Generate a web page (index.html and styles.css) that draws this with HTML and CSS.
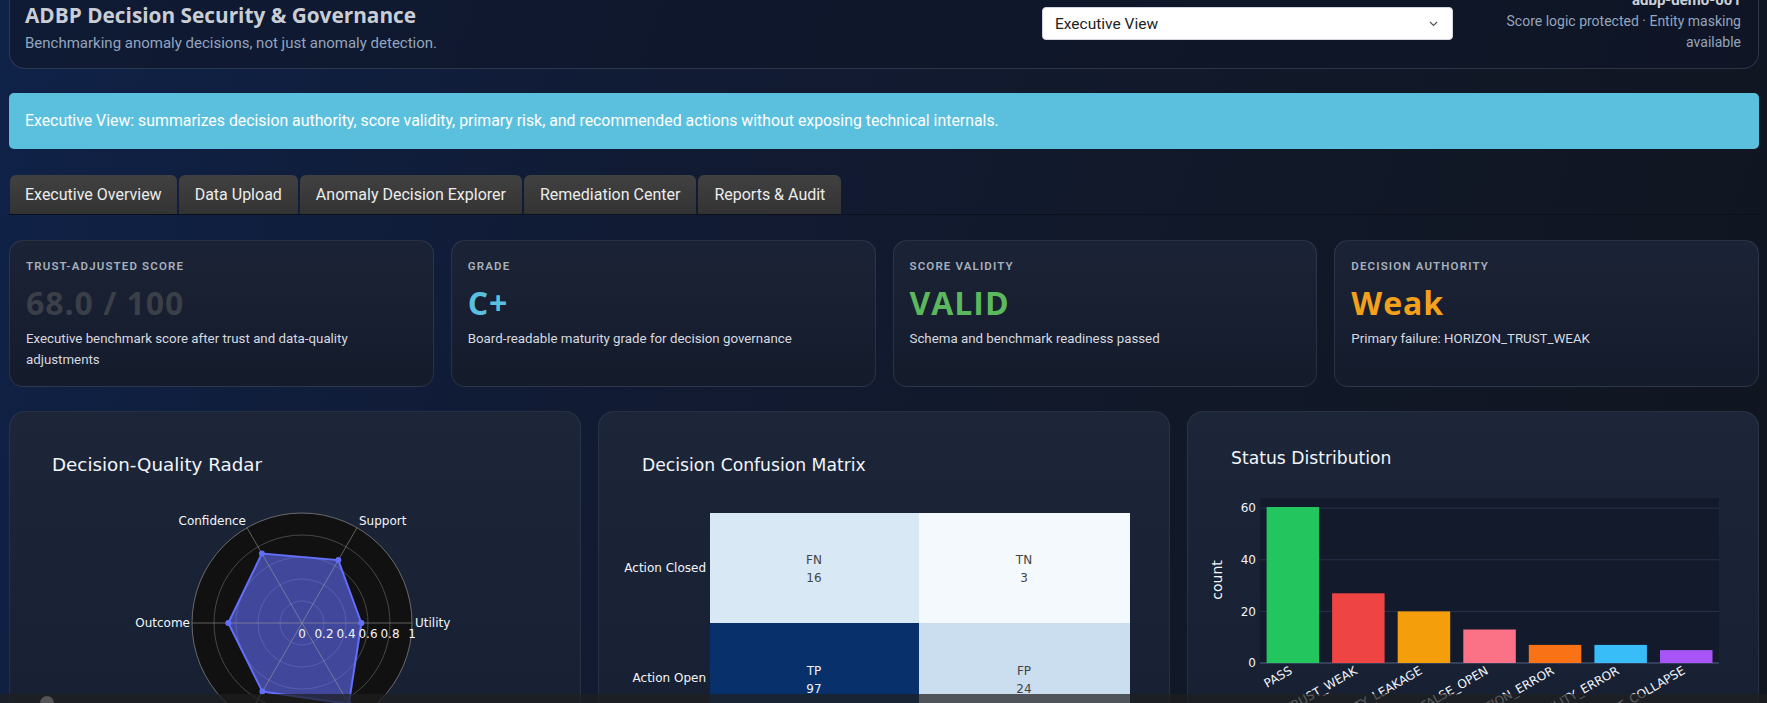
FILE: index.html
```html
<html>
	<head>
		<title>ADBP Decision Security &amp; Governance</title>
		<link rel="stylesheet" href="styles.css">
	</head>
	<body>
		<div class="page">

			<header class="hero">
				<div class="heroTitle">
					<h1>ADBP Decision Security &amp; Governance</h1>
					<p>Benchmarking anomaly decisions, not just anomaly detection.</p>
				</div>
				<div class="heroSelect">
					<div class="select">
						<span>Executive View</span>
						<svg width="9" height="6" viewBox="0 0 9 6"><polyline points="1,1 4.5,4.5 8,1" fill="none" stroke="#555" stroke-width="1.2"/></svg>
					</div>
				</div>
				<div class="heroMeta">
					<strong>adbp-demo-001</strong>
					Score logic protected · Entity masking available
				</div>
			</header>

			<div class="banner">
				Executive View: summarizes decision authority, score validity, primary risk, and recommended actions without exposing technical internals.
			</div>

			<nav class="tabs">
				<div class="tab active">Executive Overview</div>
				<div class="tab">Data Upload</div>
				<div class="tab">Anomaly Decision Explorer</div>
				<div class="tab">Remediation Center</div>
				<div class="tab">Reports &amp; Audit</div>
			</nav>

			<section class="kpis">
				<div class="kpi">
					<div class="kpiLabel">Trust-Adjusted Score</div>
					<div class="kpiValue score">68.0 / 100</div>
					<div class="kpiDesc">Executive benchmark score after trust and data-quality adjustments</div>
				</div>
				<div class="kpi">
					<div class="kpiLabel">Grade</div>
					<div class="kpiValue grade">C+</div>
					<div class="kpiDesc">Board-readable maturity grade for decision governance</div>
				</div>
				<div class="kpi">
					<div class="kpiLabel">Score Validity</div>
					<div class="kpiValue valid">VALID</div>
					<div class="kpiDesc">Schema and benchmark readiness passed</div>
				</div>
				<div class="kpi">
					<div class="kpiLabel">Decision Authority</div>
					<div class="kpiValue weak">Weak</div>
					<div class="kpiDesc">Primary failure: HORIZON_TRUST_WEAK</div>
				</div>
			</section>

			<section class="charts">
				<!-- radar -->
				<div class="chart">
					<svg class="plot" width="572" height="320" viewBox="0 0 572 320">
						<text class="plotTitle wide" x="43" y="60">Decision-Quality Radar</text>
						<circle cx="293" cy="212" r="110" fill="#111111"/>
						<g fill="none" stroke="#474747" stroke-width="1">
							<circle cx="293" cy="212" r="22"/>
							<circle cx="293" cy="212" r="44"/>
							<circle cx="293" cy="212" r="66"/>
							<circle cx="293" cy="212" r="88"/>
						</g>
						<circle cx="293" cy="212" r="110" fill="none" stroke="#6a6a6a"/>
						<polygon points="352.4,212 329.3,149.1 252.9,142.5 219.3,212 253.4,280.6 339.8,293" fill="rgba(99,110,250,0.6)" stroke="#636efa" stroke-width="2"/>
						<g stroke="rgba(160,160,160,0.55)" stroke-width="1">
							<line x1="293" y1="212" x2="403" y2="212"/>
							<line x1="293" y1="212" x2="348" y2="116.7"/>
							<line x1="293" y1="212" x2="238" y2="116.7"/>
							<line x1="293" y1="212" x2="183" y2="212"/>
							<line x1="293" y1="212" x2="238" y2="307.3"/>
							<line x1="293" y1="212" x2="348" y2="307.3"/>
						</g>
						<g fill="#636efa">
							<circle cx="352.4" cy="212" r="3"/>
							<circle cx="329.3" cy="149.1" r="3"/>
							<circle cx="252.9" cy="142.5" r="3"/>
							<circle cx="219.3" cy="212" r="3"/>
							<circle cx="253.4" cy="280.6" r="3"/>
							<circle cx="339.8" cy="293" r="3"/>
						</g>
						<g class="tick">
							<text x="237" y="114" text-anchor="end">Confidence</text>
							<text x="350" y="114">Support</text>
							<text x="181" y="216" text-anchor="end">Outcome</text>
							<text x="406" y="216">Utility</text>
						</g>
						<g class="tick" text-anchor="middle">
							<text x="293" y="227">0</text>
							<text x="315" y="227">0.2</text>
							<text x="337" y="227">0.4</text>
							<text x="359" y="227">0.6</text>
							<text x="381" y="227">0.8</text>
							<text x="403" y="227">1</text>
						</g>
					</svg>
				</div>

				<!-- confusion matrix -->
				<div class="chart">
					<svg class="plot" width="572" height="320" viewBox="0 0 572 320">
						<text class="plotTitle" x="44" y="60">Decision Confusion Matrix</text>
						<rect x="112" y="102" width="209" height="110" fill="#d9e8f5"/>
						<rect x="321" y="102" width="211" height="110" fill="#f4f9fe"/>
						<rect x="112" y="212" width="209" height="110" fill="#08306b"/>
						<rect x="321" y="212" width="211" height="110" fill="#cadef0"/>
						<g class="tick" text-anchor="end">
							<text x="108" y="161">Action Closed</text>
							<text x="108" y="271">Action Open</text>
						</g>
						<g class="cell" text-anchor="middle">
							<text x="216" y="153">FN</text>
							<text x="216" y="171">16</text>
							<text x="426" y="153">TN</text>
							<text x="426" y="171">3</text>
							<text x="426" y="264">FP</text>
							<text x="426" y="282">24</text>
						</g>
						<g class="cell light" text-anchor="middle">
							<text x="216" y="264">TP</text>
							<text x="216" y="282">97</text>
						</g>
					</svg>
				</div>

				<!-- status bars -->
				<div class="chart">
					<svg class="plot" width="572" height="320" viewBox="0 0 572 320">
						<text class="plotTitle" x="44" y="53">Status Distribution</text>
						<rect x="73" y="87" width="459" height="165" fill="#121a2b"/>
						<g stroke="#28324a" stroke-width="1">
							<line x1="73" y1="97.2" x2="532" y2="97.2"/>
							<line x1="73" y1="148.8" x2="532" y2="148.8"/>
							<line x1="73" y1="200.4" x2="532" y2="200.4"/>
							<line x1="73" y1="252" x2="532" y2="252" stroke="#34405a" stroke-width="2"/>
						</g>
						<g class="tick" text-anchor="end">
							<text x="69" y="101">60</text>
							<text x="69" y="153">40</text>
							<text x="69" y="205">20</text>
							<text x="69" y="256">0</text>
						</g>
						<text class="axisTitle" transform="translate(35,169) rotate(-90)" text-anchor="middle">count</text>
						<rect x="79.6" y="96" width="52.5" height="156" fill="#22c55e"/>
						<rect x="145.1" y="182.3" width="52.5" height="69.7" fill="#ef4444"/>
						<rect x="210.7" y="200.4" width="52.5" height="51.6" fill="#f59e0b"/>
						<rect x="276.3" y="218.5" width="52.5" height="33.5" fill="#fb7185"/>
						<rect x="341.8" y="233.9" width="52.5" height="18.1" fill="#f97316"/>
						<rect x="407.4" y="233.9" width="52.5" height="18.1" fill="#38bdf8"/>
						<rect x="473" y="239.1" width="52.5" height="12.9" fill="#a855f7"/>
						<g class="tick" text-anchor="end">
							<text transform="translate(106,262) rotate(-30)">PASS</text>
							<text transform="translate(171,262) rotate(-30)">HORIZON_TRUST_WEAK</text>
							<text transform="translate(236,262) rotate(-30)">UTILITY_LEAKAGE</text>
							<text transform="translate(302,262) rotate(-30)">ACTION_FALSE_OPEN</text>
							<text transform="translate(368,262) rotate(-30)">CALIBRATION_ERROR</text>
							<text transform="translate(433,262) rotate(-30)">STABILITY_ERROR</text>
							<text transform="translate(499,262) rotate(-30)">SUPPORT_COLLAPSE</text>
						</g>
					</svg>
				</div>
			</section>
		</div>

		<div class="statusBar"><span class="dot"></span></div>
	</body>
</html>
```

FILE: styles.css
```css
html, body {margin: 0; height: 100%; overflow: hidden;}

body {
	background: linear-gradient(110deg, #0f2248 0%, #111b34 35%, #111828 65%, #10151f 100%);
	font-family: Roboto, "Liberation Sans", sans-serif;
	color: #e5e7eb;
}

.page {
	padding: 0 8px 0 9px;
}

/* header card */
.hero {
	display: flex;
	align-items: flex-start;
	margin-top: -25px;
	padding: 14px 17px 14px 15px;
	border: 1px solid rgba(148, 163, 184, 0.22);
	border-radius: 16px;
	background: rgba(15, 22, 40, 0.6);
}
.heroTitle {
	flex: 1;
	margin-top: 11px;
}
.heroTitle h1 {
	margin: 0;
	font-family: "Open Sans", Roboto, sans-serif;
	font-size: 20.8px;
	line-height: 28px;
	font-weight: 700;
	color: #c9ced6;
}
.heroTitle p {
	margin: 3px 0 0;
	font-size: 15px;
	line-height: 22px;
	color: #93a5bf;
}
.heroSelect {
	width: 411px;
	margin: 17px 38px 0 0;
}
.select {
	height: 33px;
	box-sizing: border-box;
	display: flex;
	align-items: center;
	justify-content: space-between;
	padding: 0 14px 0 12px;
	background: #fff;
	border: 1px solid #d3d7dd;
	border-radius: 4px;
	color: #222;
	font-size: 15.5px;
}
.heroMeta {
	width: 250px;
	text-align: right;
	font-size: 14px;
	line-height: 21px;
	color: #93a5bf;
}
.heroMeta strong {
	display: block;
	font-size: 15px;
	color: #cdd2da;
}

/* info banner */
.banner {
	margin-top: 24px;
	padding: 17px 16px;
	background: #5bc0de;
	border-radius: 5px;
	color: #fff;
	font-size: 15.85px;
	line-height: 22px;
}

/* tabs */
.tabs {
	display: flex;
	gap: 2px;
	margin-top: 26px;
	padding-left: 1px;
	border-bottom: 1px solid #0b101c;
}
.tab {
	padding: 0 16px;
	line-height: 39px;
	font-size: 16px;
	color: #ececec;
	background: linear-gradient(180deg, #414141, #333333);
	border-radius: 6px 6px 0 0;
}
.tab.active {
	padding: 0 15px;
}

/* kpi cards */
.kpis {
	display: grid;
	grid-template-columns: repeat(4, 1fr);
	gap: 17px;
	margin-top: 25px;
}
.kpi {
	height: 147px;
	box-sizing: border-box;
	padding: 17px 16px;
	border: 1px solid rgba(148, 163, 184, 0.16);
	border-radius: 14px;
	background: linear-gradient(180deg, #1b2336, #141b2b);
}
.kpiLabel {
	font-size: 11.5px;
	line-height: 17px;
	font-weight: 600;
	letter-spacing: 0.1em;
	text-transform: uppercase;
	color: #a7b0bd;
}
.kpiValue {
	margin-top: 10px;
	font-family: "Open Sans", Roboto, sans-serif;
	font-size: 32px;
	line-height: 36px;
	font-weight: 700;
	letter-spacing: 0.03em;
}
.kpiValue.score {color: #3b3f48;}
.kpiValue.grade {color: #5bc0de;}
.kpiValue.valid {color: #5cb85c;}
.kpiValue.weak {color: #f3a11b;}
.kpiDesc {
	max-width: 370px;
	margin-top: 7px;
	font-size: 13.3px;
	line-height: 21px;
	color: #d6dae0;
}

/* chart cards */
.charts {
	display: grid;
	grid-template-columns: repeat(3, 1fr);
	gap: 17px;
	margin-top: 24px;
}
.chart {
	height: 320px;
	overflow: hidden;
	border: 1px solid rgba(148, 163, 184, 0.12);
	border-radius: 16px;
	background: linear-gradient(180deg, #1d2639, #172033);
}
.plot {
	display: block;
	margin: -1px 0 0 -1px;
	font-family: "DejaVu Sans", Verdana, sans-serif;
}
.plotTitle {
	font-size: 17.2px;
	fill: #f2f5fa;
}
.plotTitle.wide {
	font-size: 18.3px;
}
.tick text, .tick {
	font-size: 12px;
	fill: #f2f5fa;
}
.axisTitle {
	font-size: 14px;
	fill: #f2f5fa;
}
.cell text {
	font-size: 12px;
	fill: #444;
}
.cell.light text {
	fill: #eef2f8;
}

/* bottom overlay strip, see-through like the reference */
.statusBar {
	position: fixed;
	left: 0;
	right: 0;
	bottom: 0;
	height: 9px;
	overflow: hidden;
	background: rgba(30, 30, 30, 0.72);
}
.statusBar .dot {
	display: block;
	width: 14px;
	height: 14px;
	margin: 2px 0 0 40px;
	border-radius: 50%;
	background: #555;
}
```
